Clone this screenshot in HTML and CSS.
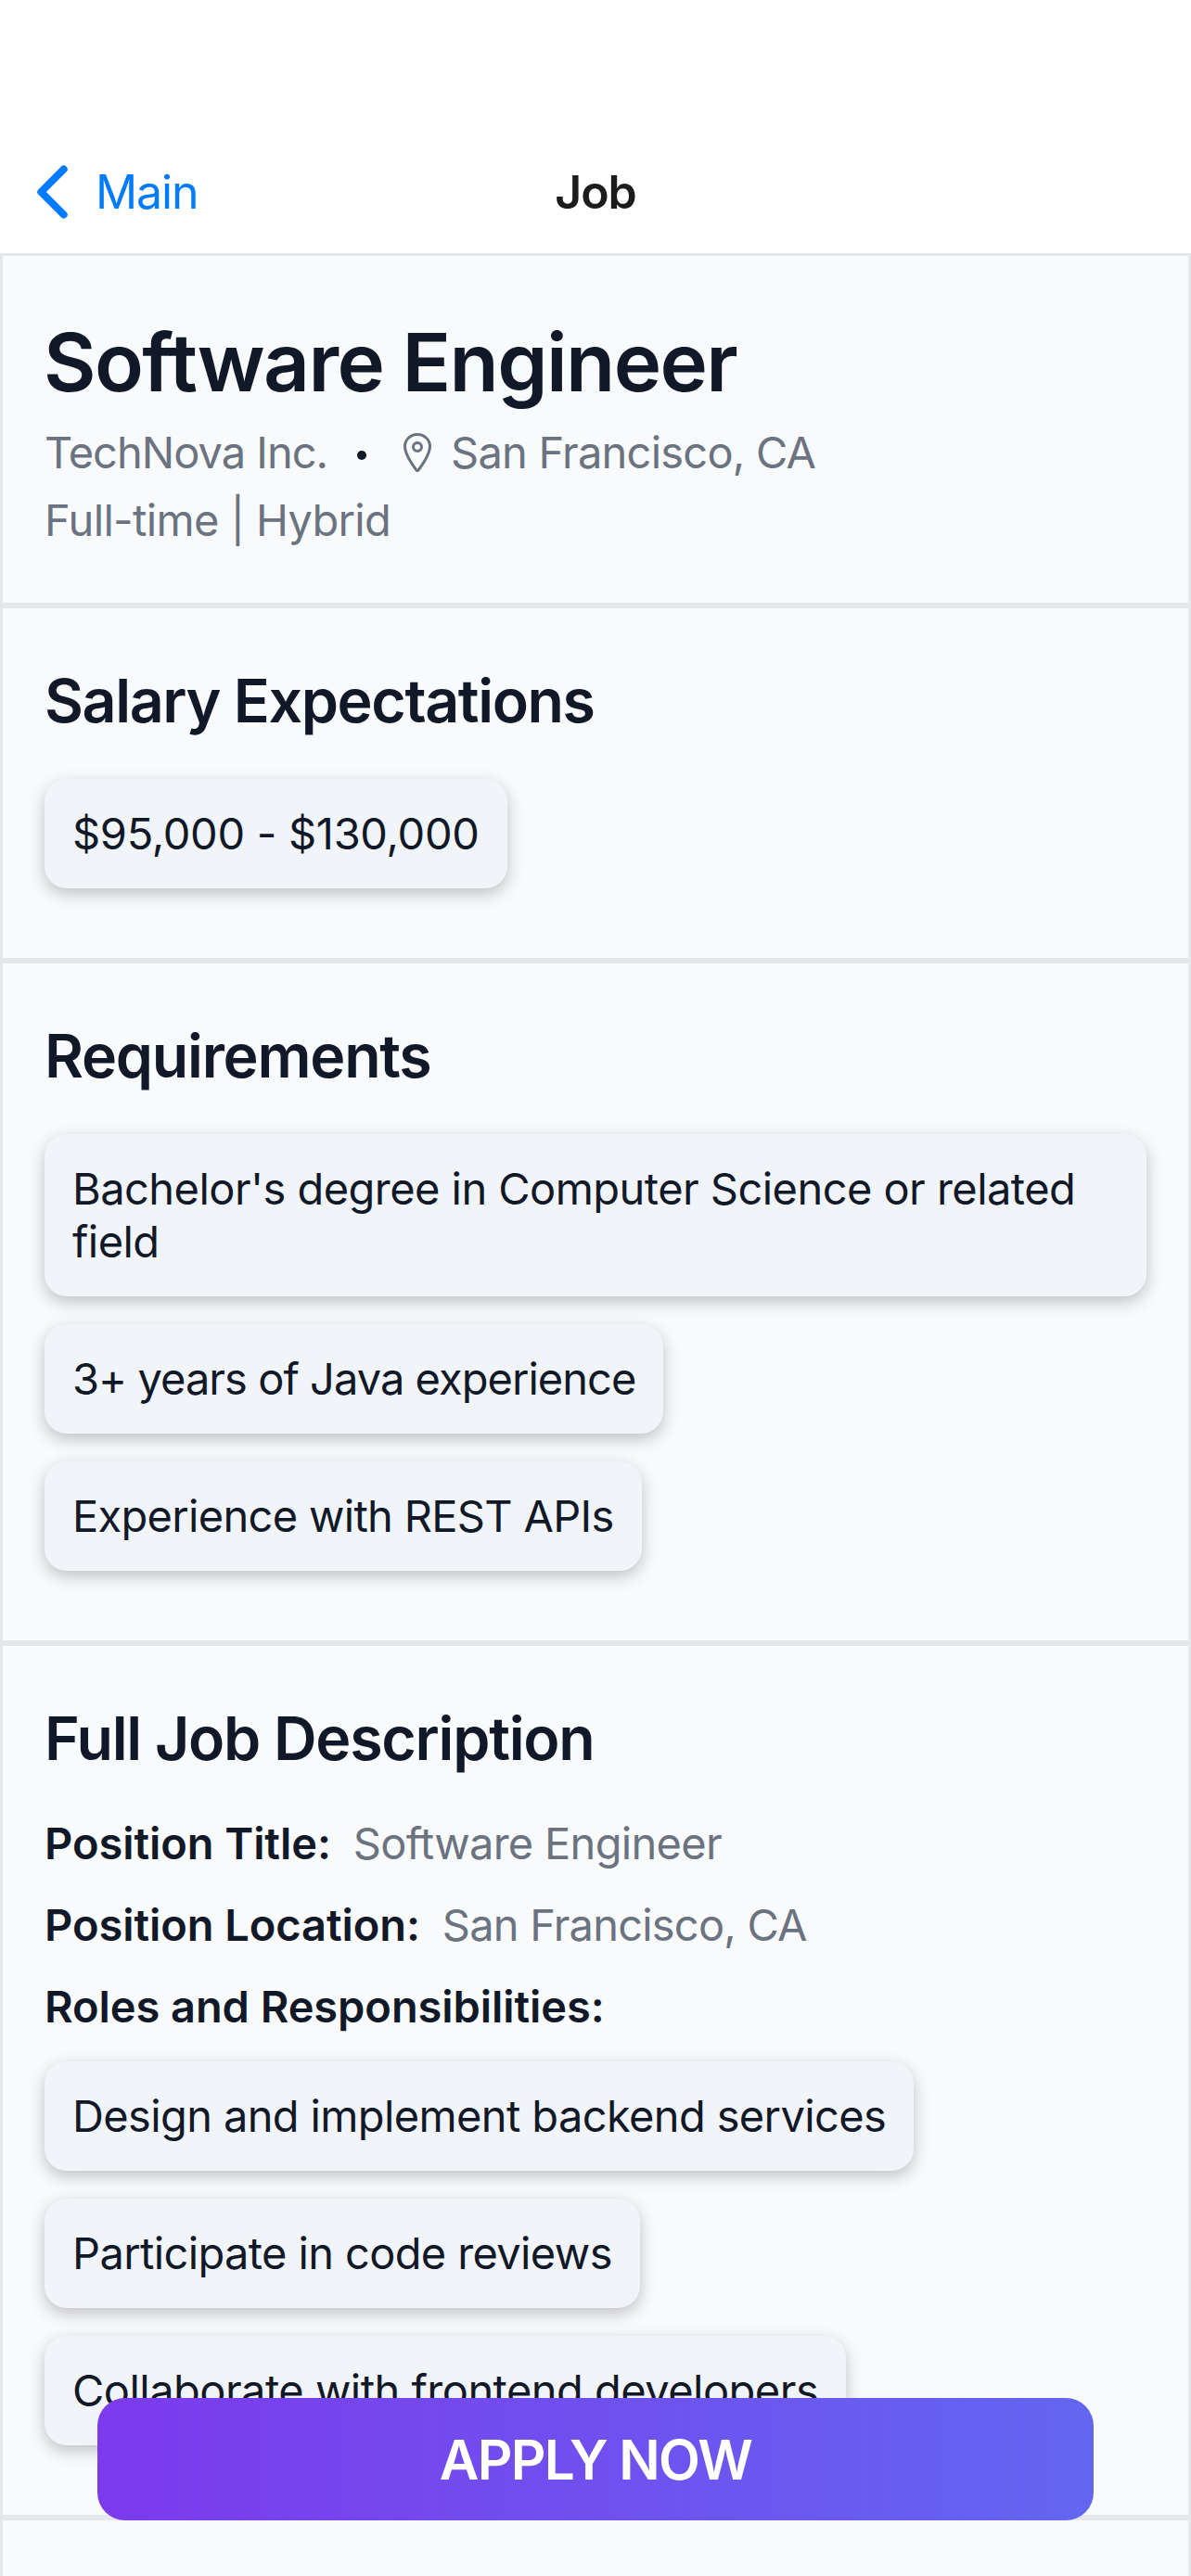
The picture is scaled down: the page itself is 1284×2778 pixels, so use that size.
FILE: index.html
```html
<!DOCTYPE html>
<html lang="en">
<head>
<meta charset="utf-8">
<title>Job</title>
<link rel="stylesheet" href="styles.css">
</head>
<body>
<div class="screen">
  <header class="nav">
    <a class="back">
      <svg class="chevron" viewBox="0 0 36 60" aria-hidden="true"><path d="M30.7 5.5 6.3 30 30.7 54.5"/></svg>
      <span class="back-label">Main</span>
    </a>
    <h1 class="nav-title">Job</h1>
  </header>
  <main class="content">
    <section class="section summary">
      <h2 class="job-title">Software Engineer</h2>
      <div class="meta">
        <span class="company">TechNova Inc.</span>
        <span class="dot"></span>
        <svg class="pin" viewBox="0 0 512 512" aria-hidden="true"><path d="M256 48c-79.5 0-144 61.39-144 137 0 87 96 224.87 131.25 272.49a15.77 15.77 0 0025.5 0C304 409.89 400 272.07 400 185c0-75.61-64.5-137-144-137z"/><circle cx="256" cy="192" r="48"/></svg>
        <span class="place">San Francisco, CA</span>
      </div>
      <div class="meta">Full-time | Hybrid</div>
    </section>
    <section class="section">
      <h3 class="heading heading-salary">Salary Expectations</h3>
      <div class="chips">
        <div class="chip chip-salary">$95,000 - $130,000</div>
      </div>
    </section>
    <section class="section">
      <h3 class="heading">Requirements</h3>
      <div class="chips">
        <div class="chip chip-multiline">Bachelor's degree in Computer Science or related field</div>
        <div class="chip chip-tight">3+ years of Java experience</div>
        <div class="chip chip-snug">Experience with REST APIs</div>
      </div>
    </section>
    <section class="section">
      <h3 class="heading">Full Job Description</h3>
      <div class="facts">
        <div class="fact"><span class="label">Position Title:</span><span class="value">Software Engineer</span></div>
        <div class="fact"><span class="label">Position Location:</span><span class="value value-place">San Francisco, CA</span></div>
        <div class="fact"><span class="label">Roles and Responsibilities:</span></div>
      </div>
      <div class="chips">
        <div class="chip">Design and implement backend services</div>
        <div class="chip">Participate in code reviews</div>
        <div class="chip chip-loose">Collaborate with frontend developers</div>
      </div>
    </section>
  </main>
  <button class="apply">APPLY NOW</button>
</div>
</body>
</html>
```

FILE: styles.css
```css
* { box-sizing: border-box; }

body {
  margin: 0;
  background: #fff;
  color: #111827;
  font-family: Inter, "Liberation Sans", sans-serif;
  font-size: 47px;
  line-height: 58px;
}

h1, h2, h3 { margin: 0; font-weight: 600; }

.screen {
  position: relative;
  display: flex;
  flex-direction: column;
  width: 1284px;
  height: 2778px;
  overflow: hidden;
}

.nav {
  display: grid;
  grid-template-columns: 1fr auto 1fr;
  align-items: center;
  height: 273px;
  padding: 141px 38px 0 38px;
  font-size: 50px;
  background: #fff;
}

.back { display: flex; align-items: center; gap: 29px; color: #007aff; }
.back-label { letter-spacing: -1.1px; }
.chevron {
  width: 36px;
  height: 60px;
  fill: none;
  stroke: currentColor;
  stroke-width: 8px;
  stroke-linecap: round;
  stroke-linejoin: round;
}

.nav-title { color: #1c1c1e; font-size: 50px; letter-spacing: -1.1px; }

.content {
  flex: 1;
  border: 3px solid #e5e7eb;
  border-bottom: 0;
  background: #f9fafc;
}

.section {
  padding: 60px 45px 75px;
  border-bottom: 6px solid #e5e7eb;
}

.summary { display: flex; flex-direction: column; gap: 15px; padding-bottom: 60px; }

.job-title {
  height: 108px;
  margin-left: -1px;
  font-size: 87px;
  line-height: 110px;
  letter-spacing: -1.63px;
}

.meta {
  display: flex;
  align-items: center;
  height: 58px;
  color: #6b7280;
  letter-spacing: -0.65px;
}
.company { letter-spacing: -0.99px; }
.dot {
  width: 10px;
  height: 10px;
  margin: 6px 31px 0 32px;
  border-radius: 50%;
  background: #111827;
}
.pin {
  width: 48px;
  height: 48px;
  margin-right: 12px;
  fill: none;
  stroke: currentColor;
  stroke-width: 32;
  stroke-linecap: round;
  stroke-linejoin: round;
}
.place, .value-place { letter-spacing: -0.78px; }

.heading {
  height: 79px;
  margin-bottom: 45px;
  font-size: 64.5px;
  line-height: 81px;
  letter-spacing: -1.27px;
}
.heading-salary { letter-spacing: -1.41px; }

.chips { display: flex; flex-direction: column; align-items: flex-start; gap: 30px; }

.chip {
  padding: 30px;
  border-radius: 24px;
  background: #f1f4f9;
  box-shadow: 0 6px 18px rgba(0, 0, 0, 0.23);
  letter-spacing: -0.63px;
}
.chip-salary { letter-spacing: -0.3px; }
.chip-multiline { height: 175px; line-height: 57px; letter-spacing: -0.55px; }
.chip-tight { letter-spacing: -0.96px; }
.chip-snug { letter-spacing: -0.69px; }
.chip-loose { letter-spacing: -0.53px; }

.facts { display: flex; flex-direction: column; gap: 30px; margin-bottom: 30px; }
.fact { display: flex; gap: 24px; }
.label { font-weight: 600; letter-spacing: -0.07px; }
.value { color: #6b7280; letter-spacing: -0.71px; }
.value.value-place { letter-spacing: -0.8px; }

.apply {
  position: absolute;
  right: 105px;
  bottom: 60px;
  left: 105px;
  height: 132px;
  padding: 2px 0 0;
  border: 0;
  border-radius: 30px;
  background: linear-gradient(90deg, #7c3aed, #6366f1);
  color: #fff;
  font: 560 58.5px/130px Inter, "Liberation Sans", sans-serif;
  letter-spacing: -1.7px;
}
```
